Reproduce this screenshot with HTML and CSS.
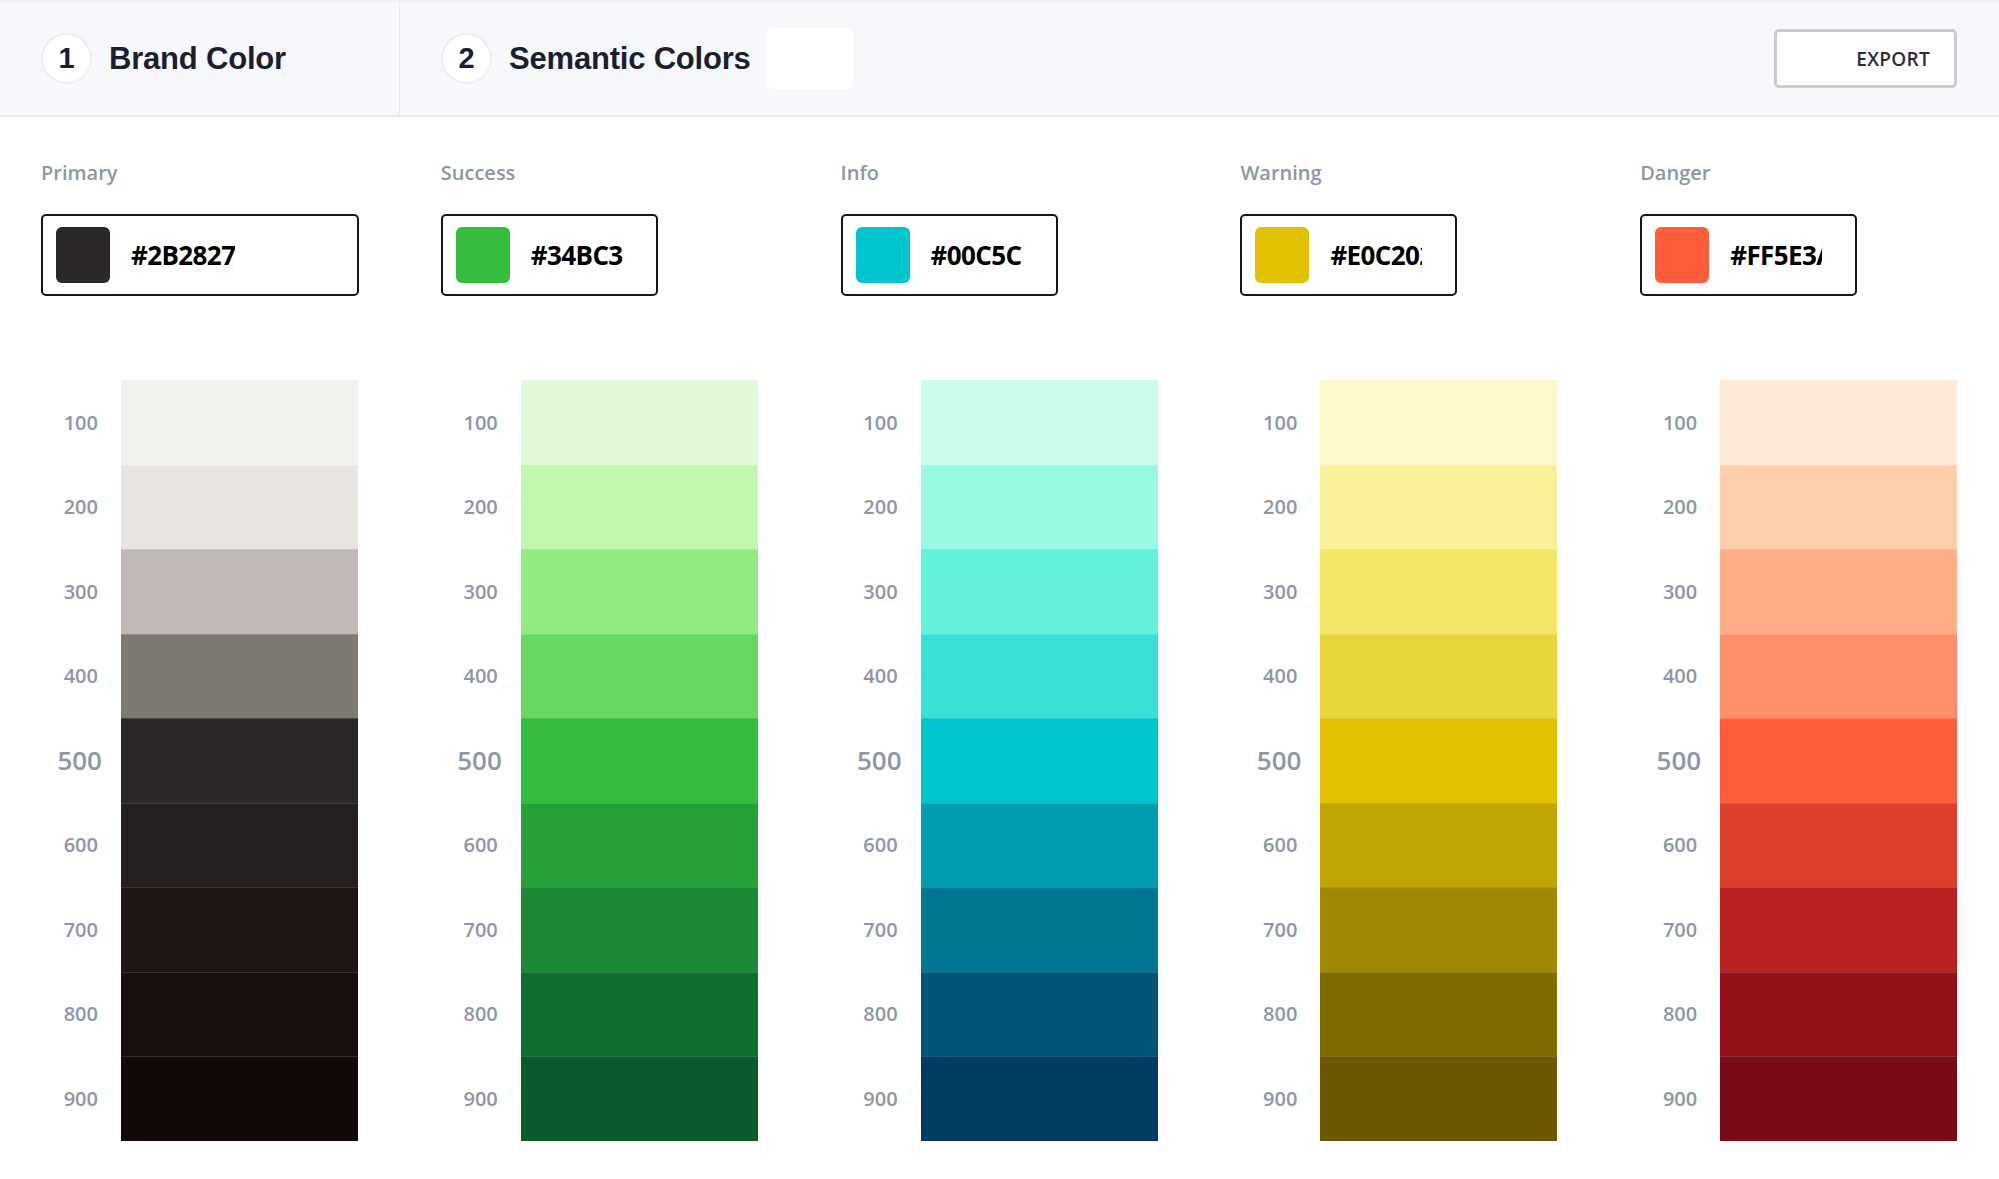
FILE: index.html
```html
<!DOCTYPE html>
<html lang="en">
<head>
<meta charset="UTF-8">
<meta name="viewport" content="width=device-width, initial-scale=1.0">
<title>Color Palette</title>
<link rel="stylesheet" href="styles.css">
</head>
<body>

<!-- Cabecera con los pasos -->
<header class="cabecera">
    <div class="paso paso-marca">
        <span class="circulo">1</span>
        <h2 class="paso-titulo">Brand Color</h2>
    </div>
    <div class="paso paso-semantico">
        <span class="circulo">2</span>
        <h2 class="paso-titulo">Semantic Colors</h2>
        <div class="caja-blanca"></div>
        <button class="btn-exportar">EXPORT</button>
    </div>
</header>

<!-- Columnas de colores -->
<main id="paleta" class="paleta"></main>

<script>
document.addEventListener("DOMContentLoaded", function() {
    var paleta = document.getElementById("paleta");

    var grupos = [
        { nombre: "Primary", valor: "#2B2827", base: "#2B2827", ancho: true,
          tonos: ["#f2f1ee", "#e8e5e1", "#c0b8b4", "#7f7974", "#2b2827", "#25201f", "#1f1514", "#190f0f", "#140909"] },
        { nombre: "Success", valor: "#34BC3", base: "#34BC3C",
          tonos: ["#e1fad9", "#c1f8ae", "#92ea82", "#66d862", "#34bc3c", "#26a13a", "#1a8835", "#116e31", "#0a5a2c"] },
        { nombre: "Info", valor: "#00C5C", base: "#00C5CC",
          tonos: ["#ccfcec", "#99fae3", "#63f1dc", "#38e1d5", "#00c5cc", "#009daf", "#007692", "#005476", "#003c61"] },
        { nombre: "Warning", valor: "#E0C202", base: "#E0C202",
          tonos: ["#fcf8cb", "#f9f198", "#f3e565", "#e9d63d", "#e0c202", "#c0a503", "#a18802", "#816c00", "#6b5800"] },
        { nombre: "Danger", valor: "#FF5E3A", base: "#FF5E3A",
          tonos: ["#ffe9d7", "#ffcfad", "#ffae87", "#ff8f69", "#ff5e3a", "#db3e2a", "#b7221e", "#931219", "#7a0b1b"] }
    ];

    grupos.forEach(function(grupo) {
        var col = document.createElement("section");
        col.className = "columna";

        var html = '<div class="etiqueta">' + grupo.nombre + '</div>';
        html += '<div class="campo' + (grupo.ancho ? ' campo-ancho' : '') + '">';
        html += '<span class="muestra" style="background:' + grupo.base + '"></span>';
        html += '<span class="hex">' + grupo.valor + '</span></div>';

        html += '<div class="escala">';
        grupo.tonos.forEach(function(tono, i) {
            var peso = (i + 1) * 100;
            html += '<div class="nivel' + (peso === 500 ? ' nivel-base' : '') + '">' + peso + '</div>';
            html += '<div class="tono" style="background:' + tono + '"></div>';
        });
        html += '</div>';

        col.innerHTML = html;
        paleta.appendChild(col);
    });
});
</script>

</body>
</html>
```

FILE: styles.css
```css
body {
    margin: 0;
    padding: 0;
    background: #fff;
    font-family: "Open Sans", sans-serif;
}

/* Cabecera */
.cabecera {
    display: flex;
    height: 117px;
    box-sizing: border-box;
    background: #f7f8fb;
    border-top: 2px solid #eef0f4;
    border-bottom: 2px solid #e4e7ee;
}

.paso {
    display: flex;
    align-items: center;
    padding-left: 41px;
}

.paso-marca {
    width: 400px;
    box-sizing: border-box;
    border-right: 1px solid #e8eaf0;
}

.paso-semantico {
    flex: 1;
    padding-right: 42px;
}

.circulo {
    width: 51px;
    height: 51px;
    box-sizing: border-box;
    border: 2px solid #eceef3;
    border-radius: 50%;
    background: #fff;
    display: flex;
    justify-content: center;
    align-items: center;
    font-family: "Liberation Sans", Arial, sans-serif;
    font-weight: bold;
    font-size: 29px;
    color: #1b1e33;
}

.paso-titulo {
    margin: 0 0 0 17px;
    font-family: "Liberation Sans", Arial, sans-serif;
    font-weight: bold;
    font-size: 31px;
    color: #1b1e33;
    letter-spacing: -0.2px;
}

.caja-blanca {
    width: 86px;
    height: 61px;
    margin-left: 16px;
    background: #fff;
    border-radius: 6px;
}

.btn-exportar {
    margin-left: auto;
    width: 183px;
    height: 59px;
    padding: 0 24px 0 0;
    text-align: right;
    background: #fff;
    border: 3px solid #c9cbd2;
    border-radius: 5px;
    font-family: "Open Sans", sans-serif;
    font-weight: 600;
    font-size: 19px;
    letter-spacing: 0.3px;
    color: #2a2d36;
    cursor: pointer;
}

/* Paleta */
.paleta {
    display: flex;
    padding-top: 42px;
}

.columna {
    width: 400px;
    box-sizing: border-box;
    padding-left: 41px;
}

.etiqueta {
    font-size: 20px;
    font-weight: 600;
    line-height: 28px;
    color: #8d96a9;
}

.campo {
    display: flex;
    align-items: center;
    width: 217px;
    height: 82px;
    box-sizing: border-box;
    margin-top: 27px;
    padding: 0 13px;
    border: 2px solid #161616;
    border-radius: 5px;
    background: #fff;
}

.campo-ancho {
    width: 318px;
}

.muestra {
    flex: none;
    width: 54px;
    height: 56px;
    border-radius: 6px;
}

.hex {
    margin-left: 21px;
    width: 92px;
    overflow: hidden;
    white-space: nowrap;
    font-size: 26px;
    font-weight: 700;
    letter-spacing: -0.6px;
    color: #000;
}

.campo-ancho .hex {
    width: auto;
}

.escala {
    display: grid;
    grid-template-columns: 57px 237px;
    grid-auto-rows: 84.5px;
    column-gap: 23px;
    margin-top: 84px;
}

.nivel {
    display: flex;
    justify-content: flex-end;
    align-items: center;
    font-size: 20px;
    font-weight: 600;
    color: #8d96a9;
}

.nivel-base {
    font-size: 26px;
    margin-right: -4px;
}

.tono {
    box-shadow: inset 0 1px 0 rgba(255, 255, 255, 0.14);
}
```
